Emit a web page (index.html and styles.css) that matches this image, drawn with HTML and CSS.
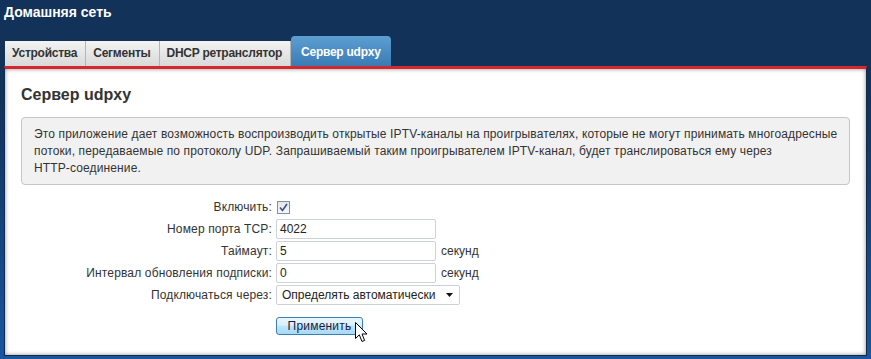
FILE: index.html
```html
<!DOCTYPE html>
<html lang="ru">
<head>
    <meta charset="UTF-8">
    <meta name="viewport" content="width=device-width, initial-scale=1.0">
    <title>Сервер udpxy</title>
    <link rel="stylesheet" href="styles.css">
</head>
<body>
    <h1 class="page-title">Домашняя сеть</h1>

    <div class="tabs">
        <a class="tab">Устройства</a>
        <a class="tab">Сегменты</a>
        <a class="tab">DHCP ретранслятор</a>
        <a class="tab tab-active">Сервер udpxy</a>
    </div>

    <div class="panel">
        <h2 class="panel-title">Сервер udpxy</h2>

        <div class="info-box">
            Это приложение дает возможность воспроизводить открытые IPTV-каналы на проигрывателях, которые не могут принимать многоадресные<br>
            потоки, передаваемые по протоколу UDP. Запрашиваемый таким проигрывателем IPTV-канал, будет транслироваться ему через<br>
            HTTP-соединение.
        </div>

        <div class="form">
            <div class="form-row">
                <label class="form-label">Включить:</label>
                <span class="checkbox">
                    <svg width="9" height="9" viewBox="0 0 9 9"><path d="M1 4.5 L3.5 7.5 L8 1" fill="none" stroke="#3b4f96" stroke-width="1.6"/></svg>
                </span>
            </div>
            <div class="form-row">
                <label class="form-label">Номер порта TCP:</label>
                <input class="text-input" type="text" value="4022">
            </div>
            <div class="form-row">
                <label class="form-label">Таймаут:</label>
                <input class="text-input" type="text" value="5">
                <span class="unit">секунд</span>
            </div>
            <div class="form-row">
                <label class="form-label">Интервал обновления подписки:</label>
                <input class="text-input" type="text" value="0">
                <span class="unit">секунд</span>
            </div>
            <div class="form-row">
                <label class="form-label">Подключаться через:</label>
                <div class="select">
                    <span>Определять автоматически</span>
                    <svg width="8" height="4" viewBox="0 0 8 4"><path d="M0 0 H7 L3.5 4 Z" fill="#111"/></svg>
                </div>
            </div>

            <div class="actions">
                <button class="btn-apply">Применить</button>
                <svg class="cursor" width="13" height="21" viewBox="0 0 13 21"><path d="M0.5 0.5 V16.5 L4.3 12.8 L7 19.5 L9.6 18.4 L7 12 H12 Z" fill="#fff" stroke="#000" stroke-width="1"/></svg>
            </div>
        </div>
    </div>
</body>
</html>
```

FILE: styles.css
```css
body {
    margin: 0;
    height: 359px;
    overflow: hidden;
    font-family: "Liberation Sans", Arial, sans-serif;
    font-size: 12px;
    color: #333;
    background: linear-gradient(#133259 0, #133259 100px, #1856a0 100%);
}
.page-title {
    margin: 0;
    padding: 4px 0 0 4px;
    font-size: 14px;
    line-height: 16px;
    color: #fff;
}
.tabs {
    display: flex;
    align-items: flex-end;
    margin-top: 16px;
    padding-left: 5px;
    height: 30px;
}
.tab {
    height: 25px;
    line-height: 25px;
    padding: 0 8px 0 7px;
    font-weight: bold;
    letter-spacing: -0.25px;
    color: #333;
    background: linear-gradient(#f3f3f3, #d9d9d9);
    border-right: 1px solid #b5b5b5;
}
.tab-active {
    height: 26px;
    line-height: 24px;
    padding: 4px 10px 0 10px;
    color: #fff;
    border-right: none;
    border-radius: 4px 4px 0 0;
    background: linear-gradient(#5d9fd2, #3a7bb4);
}
.panel {
    margin: 0 4px;
    padding: 16px 16px 20px 16px;
    background: #fff;
    border: 1px solid #0f2a4d;
    border-top: 3px solid #d3292e;
    box-shadow: inset 0 0 4px rgba(0, 0, 0, 0.45);
}
.panel-title {
    margin: 0;
    font-size: 16px;
    line-height: 20px;
    color: #333;
}
.info-box {
    margin-top: 12px;
    padding: 8px 4px 7px 12px;
    line-height: 17px;
    letter-spacing: 0.13px;
    white-space: nowrap;
    background: #f1f1f1;
    border: 1px solid #c6c6c6;
    border-radius: 4px;
}
.form {
    margin-top: 11px;
}
.form-row {
    display: flex;
    align-items: center;
    height: 22px;
}
.form-label {
    width: 251px;
    margin-right: 4px;
    text-align: right;
    letter-spacing: 0.15px;
}
.checkbox {
    display: flex;
    align-items: center;
    justify-content: center;
    width: 11px;
    height: 11px;
    margin-left: 1px;
    border: 1px solid #8190a8;
    background: linear-gradient(#e6e6e6, #f7f7f7);
}
.text-input {
    box-sizing: border-box;
    width: 160px;
    height: 20px;
    margin: 0;
    padding: 0 3px;
    font-family: inherit;
    font-size: 12px;
    color: #222;
    border: 1px solid #cdd1d9;
    border-radius: 2px;
    outline: none;
}
.unit {
    margin-left: 5px;
}
.select {
    box-sizing: border-box;
    display: flex;
    align-items: center;
    justify-content: space-between;
    width: 184px;
    height: 20px;
    padding: 0 5px 0 5px;
    color: #222;
    border: 1px solid #cdd1d9;
    border-radius: 2px;
}
.actions {
    position: relative;
    margin: 11px 0 0 255px;
    height: 18px;
}
.btn-apply {
    box-sizing: border-box;
    width: 87px;
    height: 18px;
    padding: 0;
    font-family: inherit;
    font-size: 12px;
    letter-spacing: 0.2px;
    color: #1c1c3a;
    border: 1px solid #3c7fb1;
    border-radius: 3px;
    background: linear-gradient(#eaf6fd 0, #d9f0fc 45%, #bee6fd 50%, #a7d9f5 100%);
    cursor: pointer;
}
.cursor {
    position: absolute;
    left: 79px;
    top: 5px;
}
```
